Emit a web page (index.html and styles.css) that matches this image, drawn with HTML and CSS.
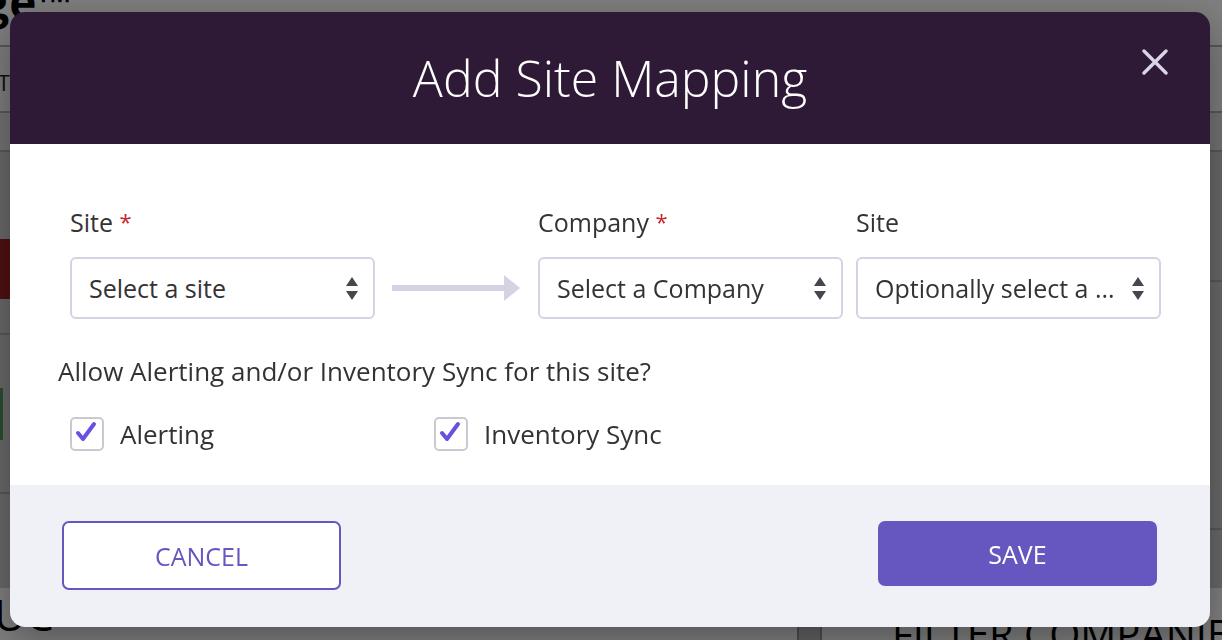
FILE: index.html
```html
<!DOCTYPE html>
<html lang="en">
<head>
    <meta charset="UTF-8">
    <meta name="viewport" content="width=device-width, initial-scale=1.0">
    <title>Add Site Mapping</title>
    <link rel="stylesheet" href="styles.css">
</head>
<body>
    <!-- page behind the dialog -->
    <div class="page">
        <header class="page-head">
            <div class="brand"><span>Exchange™</span></div>
        </header>
        <nav class="page-tabs">
            <div class="tab-label"><span>REPORT</span></div>
        </nav>
        <div class="page-toolbar"></div>
        <main class="page-main">
            <div class="page-left">
                <div class="red-btn"></div>
                <div class="left-rule"></div>
                <div class="green-tag"></div>
                <div class="left-rule low"></div>
            </div>
            <div class="page-right">
                <div class="right-rule"></div>
                <div class="right-rule second"></div>
            </div>
        </main>
        <footer class="page-foot">
            <div class="foot-left"><span>UC</span></div>
            <div class="foot-split"></div>
            <div class="foot-right">FILTER COMPANIES</div>
        </footer>
    </div>

    <div class="overlay"></div>

    <div class="modal">
        <div class="modal-head">
            <h2>Add Site Mapping</h2>
            <button class="close-btn" aria-label="Close">
                <svg width="26" height="26" viewBox="0 0 26 26">
                    <path d="M2 2 L24 24 M24 2 L2 24" stroke="#d9d4e6" stroke-width="3.4" stroke-linecap="round"/>
                </svg>
            </button>
        </div>

        <div class="modal-body">
            <div class="field-row">
                <div class="field">
                    <label>Site <span class="req">*</span></label>
                    <div class="select">
                        <span>Select a site</span>
                        <svg class="caret" width="12" height="23" viewBox="0 0 12 23"><path d="M6 0 L12 9 H0 Z M0 14 H12 L6 23 Z" fill="#46464e"/></svg>
                    </div>
                </div>
                <div class="map-arrow">
                    <svg width="128" height="26" viewBox="0 0 128 26"><rect x="0" y="10" width="114" height="6" fill="#d4d2e3"/><path d="M112 0 L128 13 L112 26 Z" fill="#d4d2e3"/></svg>
                </div>
                <div class="field">
                    <label>Company <span class="req">*</span></label>
                    <div class="select">
                        <span>Select a Company</span>
                        <svg class="caret" width="12" height="23" viewBox="0 0 12 23"><path d="M6 0 L12 9 H0 Z M0 14 H12 L6 23 Z" fill="#46464e"/></svg>
                    </div>
                </div>
                <div class="field last">
                    <label>Site</label>
                    <div class="select">
                        <span>Optionally select a ...</span>
                        <svg class="caret" width="12" height="23" viewBox="0 0 12 23"><path d="M6 0 L12 9 H0 Z M0 14 H12 L6 23 Z" fill="#46464e"/></svg>
                    </div>
                </div>
            </div>

            <p class="question">Allow Alerting and/or Inventory Sync for this site?</p>

            <div class="check-row">
                <label class="check">
                    <span class="box"><svg width="30" height="30" viewBox="0 0 30 30"><path d="M6 14 L11 20 L22 5" fill="none" stroke="#6a4fe0" stroke-width="4" stroke-linecap="round" stroke-linejoin="round"/></svg></span>
                    Alerting
                </label>
                <label class="check">
                    <span class="box"><svg width="30" height="30" viewBox="0 0 30 30"><path d="M6 14 L11 20 L22 5" fill="none" stroke="#6a4fe0" stroke-width="4" stroke-linecap="round" stroke-linejoin="round"/></svg></span>
                    Inventory Sync
                </label>
            </div>
        </div>

        <div class="modal-foot">
            <button class="btn-cancel">CANCEL</button>
            <button class="btn-save">SAVE</button>
        </div>
    </div>
</body>
</html>
```

FILE: styles.css
```css
:root {
  --plum: #2e1a36;
  --purple: #6656bf;
  --field-border: #d5d3e3;
  --text: #333336;
  --foot-bg: #f0f1f6;
}

* { box-sizing: border-box; }

html, body {
  margin: 0;
  height: 100%;
}

body {
  font-family: "Open Sans", "Liberation Sans", sans-serif;
  color: var(--text);
  overflow: hidden;
  background: #d2d2d2;
}

/* background page */
.page {
  height: 640px;
  display: flex;
  flex-direction: column;
}

.page-head {
  height: 47px;
  background: #fff;
  border-bottom: 2px solid #b0b0b0;
}

.brand {
  width: 72px;
  display: flex;
  justify-content: flex-end;
  white-space: nowrap;
  font-size: 46px;
  font-weight: 700;
  line-height: 1;
  margin-top: -22px;
  color: #000;
}

.page-tabs {
  height: 66px;
  background: #fafafa;
  border-bottom: 2px solid #b0b0b0;
}

.tab-label {
  width: 10px;
  display: flex;
  justify-content: flex-end;
  white-space: nowrap;
  font-size: 22px;
  color: #222;
  margin-top: 20px;
}

.page-toolbar {
  height: 39px;
  background: #e6e6e6;
  border-bottom: 2px solid #b0b0b0;
}

.page-main {
  flex: 1;
  display: flex;
  justify-content: space-between;
}

.page-left { width: 40px; }

.red-btn {
  height: 60px;
  margin-top: 87px;
  background: #9e2020;
}

.left-rule {
  height: 2px;
  margin-top: 34px;
  background: #b0b0b0;
}

.left-rule.low { margin-top: 52px; }

.green-tag {
  width: 3px;
  height: 52px;
  margin-top: 53px;
  background: #4e9c5e;
}

.page-right { width: 40px; }

.right-rule {
  height: 2px;
  margin-top: 128px;
  background: #b0b0b0;
}

.right-rule.second { margin-top: 246px; }

.page-foot {
  height: 52px;
  display: flex;
  background: #fff;
}

.foot-left {
  width: 797px;
  flex-shrink: 0;
  font-size: 44px;
  line-height: 1;
  color: #000;
  margin-top: 4px;
}

.foot-left span { margin-left: -6px; }

.foot-split {
  width: 25px;
  flex-shrink: 0;
  background: #c4c4c4;
  border-left: 2px solid #9c9c9c;
  border-right: 2px solid #9c9c9c;
}

.foot-right {
  padding-left: 70px;
  font-size: 40px;
  color: #000;
  white-space: nowrap;
  margin-top: 18px;
}

.overlay {
  position: fixed;
  inset: 0;
  background: rgba(0, 0, 0, 0.5);
}

/* dialog */
.modal {
  position: fixed;
  left: 10px;
  top: 12px;
  width: 1200px;
  border-radius: 15px;
  overflow: hidden;
  box-shadow: 0 12px 40px rgba(0, 0, 0, 0.35);
}

.modal-head {
  position: relative;
  height: 132px;
  background: var(--plum);
  display: flex;
  align-items: center;
  justify-content: center;
}

.modal-head h2 {
  margin: 0;
  font-size: 50px;
  font-weight: 300;
  color: #fff;
}

.close-btn {
  position: absolute;
  top: 37px;
  right: 42px;
  width: 26px;
  height: 26px;
  padding: 0;
  border: none;
  background: none;
  cursor: pointer;
}

.close-btn svg { display: block; }

.modal-body {
  background: #fff;
  padding: 61px 49px 34px 48px;
}

.field-row {
  display: flex;
  margin-left: 12px;
}

.field { width: 305px; }
.field.last { margin-left: 13px; }

.field label {
  display: block;
  font-size: 25px;
  line-height: 35px;
  height: 35px;
  margin-bottom: 17px;
}

.req {
  color: #c4282c;
  font-size: 22px;
  line-height: 0;
  vertical-align: 2px;
}

.select {
  height: 62px;
  border: 2px solid var(--field-border);
  border-radius: 6px;
  padding: 0 15px 0 17px;
  display: flex;
  align-items: center;
  justify-content: space-between;
  font-size: 25px;
  white-space: nowrap;
}

.caret { flex-shrink: 0; }

.map-arrow {
  width: 163px;
  height: 62px;
  align-self: flex-end;
  display: flex;
  align-items: center;
  justify-content: center;
}

.map-arrow svg { margin-left: -1px; }

.question {
  margin: 35px 0 28px;
  font-size: 26px;
  line-height: 35px;
}

.check-row {
  display: grid;
  grid-template-columns: 364px auto;
  margin-left: 12px;
}

.check {
  display: flex;
  align-items: center;
  gap: 16px;
  font-size: 26px;
  line-height: 34px;
}

.box {
  width: 34px;
  height: 34px;
  border: 2px solid #c9c9d1;
  border-radius: 5px;
  background: #fff;
}

.box svg { display: block; }

.modal-foot {
  background: var(--foot-bg);
  padding: 36px 53px 37px 52px;
  display: flex;
  justify-content: space-between;
  align-items: flex-start;
}

.modal-foot button {
  width: 279px;
  font-family: inherit;
  font-size: 25px;
  border-radius: 7px;
  cursor: pointer;
}

.btn-cancel {
  height: 69px;
  background: #fff;
  color: var(--purple);
  border: 2px solid var(--purple);
}

.btn-save {
  height: 65px;
  background: var(--purple);
  color: #fff;
  border: none;
}
```
